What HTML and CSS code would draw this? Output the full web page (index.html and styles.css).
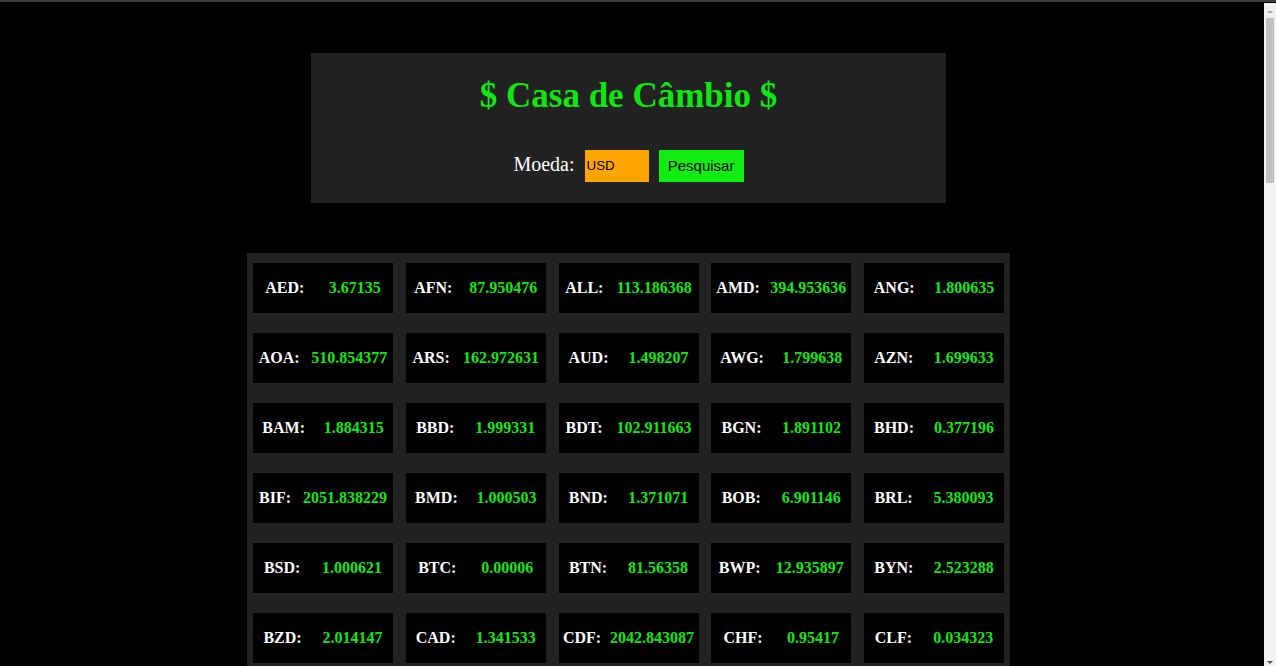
FILE: index.html
```html
<!DOCTYPE html>
<html lang="pt-BR">
<head>
<meta charset="utf-8">
<title>Casa de Câmbio</title>
<link rel="stylesheet" href="styles.css">
</head>
<body>
<div class="topline"></div>
<main class="page">
  <header class="panel">
    <h1 class="title">$ Casa de Câmbio $</h1>
    <form class="search">
      <label class="search-label" for="moeda">Moeda:</label>
      <input class="search-input" id="moeda" type="text" value="USD">
      <button class="search-btn" type="button">Pesquisar</button>
    </form>
  </header>
  <section class="rates">
    <div class="card"><span class="code">AED:</span><span class="val">3.67135</span></div>
    <div class="card"><span class="code">AFN:</span><span class="val">87.950476</span></div>
    <div class="card"><span class="code">ALL:</span><span class="val">113.186368</span></div>
    <div class="card"><span class="code">AMD:</span><span class="val">394.953636</span></div>
    <div class="card"><span class="code">ANG:</span><span class="val">1.800635</span></div>
    <div class="card"><span class="code">AOA:</span><span class="val">510.854377</span></div>
    <div class="card"><span class="code">ARS:</span><span class="val">162.972631</span></div>
    <div class="card"><span class="code">AUD:</span><span class="val">1.498207</span></div>
    <div class="card"><span class="code">AWG:</span><span class="val">1.799638</span></div>
    <div class="card"><span class="code">AZN:</span><span class="val">1.699633</span></div>
    <div class="card"><span class="code">BAM:</span><span class="val">1.884315</span></div>
    <div class="card"><span class="code">BBD:</span><span class="val">1.999331</span></div>
    <div class="card"><span class="code">BDT:</span><span class="val">102.911663</span></div>
    <div class="card"><span class="code">BGN:</span><span class="val">1.891102</span></div>
    <div class="card"><span class="code">BHD:</span><span class="val">0.377196</span></div>
    <div class="card"><span class="code">BIF:</span><span class="val">2051.838229</span></div>
    <div class="card"><span class="code">BMD:</span><span class="val">1.000503</span></div>
    <div class="card"><span class="code">BND:</span><span class="val">1.371071</span></div>
    <div class="card"><span class="code">BOB:</span><span class="val">6.901146</span></div>
    <div class="card"><span class="code">BRL:</span><span class="val">5.380093</span></div>
    <div class="card"><span class="code">BSD:</span><span class="val">1.000621</span></div>
    <div class="card"><span class="code">BTC:</span><span class="val">0.00006</span></div>
    <div class="card"><span class="code">BTN:</span><span class="val">81.56358</span></div>
    <div class="card"><span class="code">BWP:</span><span class="val">12.935897</span></div>
    <div class="card"><span class="code">BYN:</span><span class="val">2.523288</span></div>
    <div class="card"><span class="code">BZD:</span><span class="val">2.014147</span></div>
    <div class="card"><span class="code">CAD:</span><span class="val">1.341533</span></div>
    <div class="card"><span class="code">CDF:</span><span class="val">2042.843087</span></div>
    <div class="card"><span class="code">CHF:</span><span class="val">0.95417</span></div>
    <div class="card"><span class="code">CLF:</span><span class="val">0.034323</span></div>
    <div class="card"><span class="code">CLP:</span><span class="val">912.06</span></div>
    <div class="card"><span class="code">CNH:</span><span class="val">7.146905</span></div>
    <div class="card"><span class="code">CNY:</span><span class="val">7.141807</span></div>
    <div class="card"><span class="code">COP:</span><span class="val">4946.127</span></div>
    <div class="card"><span class="code">CRC:</span><span class="val">575.617389</span></div>
    <div class="card"><span class="code">CUC:</span><span class="val">1.000504</span></div>
    <div class="card"><span class="code">CUP:</span><span class="val">25.76334</span></div>
    <div class="card"><span class="code">CVE:</span><span class="val">104.61729</span></div>
    <div class="card"><span class="code">CZK:</span><span class="val">23.178009</span></div>
    <div class="card"><span class="code">DJF:</span><span class="val">177.838401</span></div>
  </section>
</main>
<div class="scrollbar" aria-hidden="true">
  <span class="sb-arrow sb-up"></span>
  <span class="sb-thumb"></span>
  <span class="sb-arrow sb-down"></span>
</div>
</body>
</html>
```
FILE: styles.css
```css
html, body {
  margin: 0;
  padding: 0;
  background: #000;
}

body {
  font-family: "Liberation Serif", "Times New Roman", serif;
  color: #fff;
  padding-right: 19px;
}

.topline {
  position: fixed;
  top: 0;
  left: 0;
  right: 0;
  height: 2px;
  background: #3d3d3d;
  z-index: 3;
}

.page {
  display: flex;
  flex-direction: column;
  align-items: center;
  padding-top: 2px;
  padding-bottom: 40px;
}

.panel {
  width: 635px;
  margin-top: 51px;
  background: #222;
  padding: 23px 0 21px;
  box-sizing: border-box;
  display: flex;
  flex-direction: column;
  align-items: center;
}

.title {
  margin: 0;
  font-size: 35px;
  font-weight: bold;
  line-height: 39px;
  color: #12e612;
}

.search {
  margin-top: 35px;
  display: flex;
  align-items: center;
  height: 32px;
}

.search-label {
  font-size: 20px;
  color: #fff;
  margin-right: 10px;
  position: relative;
  top: -2px;
}

.search-input {
  width: 64px;
  height: 32px;
  box-sizing: border-box;
  border: none;
  padding: 0 2px 2px;
  margin: 0 10px 0 0;
  background: #ffa500;
  color: #000;
  font-family: "Liberation Sans", Arial, sans-serif;
  font-size: 13.33px;
  outline: none;
}

.search-btn {
  width: 85px;
  height: 32px;
  box-sizing: border-box;
  border: none;
  padding: 0 0 2px;
  margin: 0;
  background: #11ec11;
  color: #000;
  font-family: "Liberation Sans", Arial, sans-serif;
  font-size: 15px;
}

.rates {
  margin-top: 50px;
  width: 763px;
  box-sizing: border-box;
  background: #222;
  padding: 10px 6px;
  display: grid;
  grid-template-columns: repeat(5, 140px);
  justify-content: space-between;
  row-gap: 20px;
}

.card {
  height: 50px;
  background: #000;
  display: flex;
  justify-content: space-around;
  align-items: center;
  font-size: 16px;
  font-weight: bold;
}

.code {
  color: #fff;
}

.val {
  color: #14e614;
}

.scrollbar {
  position: fixed;
  top: 3px;
  right: 0;
  bottom: 0;
  width: 12px;
  background: #f1f1f1;
  z-index: 2;
}

.sb-arrow {
  position: absolute;
  left: 3px;
  width: 0;
  height: 0;
  border-left: 3px solid transparent;
  border-right: 3px solid transparent;
}

.sb-up {
  top: 7px;
  border-bottom: 3px solid #a3a3a3;
}

.sb-down {
  bottom: 2px;
  border-top: 3px solid #505050;
}

.sb-thumb {
  position: absolute;
  top: 15px;
  left: 2px;
  width: 8px;
  height: 165px;
  background: #c1c1c1;
}
```
